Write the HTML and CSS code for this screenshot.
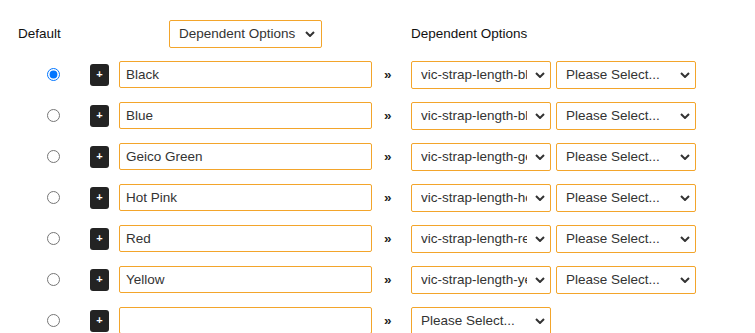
FILE: index.html
```html
<!DOCTYPE html>
<html lang="en">
<head>
    <meta charset="UTF-8">
    <meta name="viewport" content="width=device-width, initial-scale=1.0">
    <title>Dependent Options</title>
    <link rel="stylesheet" href="styles.css">
</head>
<body>
    <div class="options" id="options">
        <!-- Header -->
        <div class="row head">
            <div class="col-default">Default</div>
            <div class="col-btn"></div>
            <div class="col-name">
                <div class="select-box head-select">
                    <select><option>Dependent Options</option></select>
                    <svg class="chevron" width="10" height="6" viewBox="0 0 10 6"><path d="M1 1l4 4 4-4" fill="none" stroke="#333" stroke-width="2"/></svg>
                </div>
            </div>
            <div class="col-sep"></div>
            <div class="col-deps">Dependent Options</div>
        </div>
        <!-- Option rows are added here -->
    </div>

    <script>
        // Option rows
        const optionData = [
            { name: "Black", deps: ["vic-strap-length-black", "Please Select..."] },
            { name: "Blue", deps: ["vic-strap-length-blue", "Please Select..."] },
            { name: "Geico Green", deps: ["vic-strap-length-geico-green", "Please Select..."] },
            { name: "Hot Pink", deps: ["vic-strap-length-hot-pink", "Please Select..."] },
            { name: "Red", deps: ["vic-strap-length-red", "Please Select..."] },
            { name: "Yellow", deps: ["vic-strap-length-yellow", "Please Select..."] },
            { name: "", deps: ["Please Select..."] },
        ];

        const chevron = '<svg class="chevron" width="10" height="6" viewBox="0 0 10 6"><path d="M1 1l4 4 4-4" fill="none" stroke="#333" stroke-width="2"/></svg>';

        const options = document.getElementById('options');
        optionData.forEach((opt, index) => {
            const row = document.createElement('div');
            row.className = 'row';
            row.innerHTML = `
                <div class="col-default"><input type="radio" name="default" ${index === 0 ? 'checked' : ''}></div>
                <div class="col-btn"><span class="add-btn">+</span></div>
                <div class="col-name"><input class="name-input" type="text" value="${opt.name}"></div>
                <div class="col-sep">&raquo;</div>
                <div class="col-deps">
                    ${opt.deps.map(d => `<div class="select-box"><select><option>${d}</option></select>${chevron}</div>`).join('')}
                </div>
            `;
            options.appendChild(row);
        });
    </script>
</body>
</html>
```

FILE: styles.css
```css
/* General Styles */
* {
    margin: 0;
    padding: 0;
    box-sizing: border-box;
}

body {
    background: #fff;
    color: #111;
    font-family: 'Liberation Sans', Arial, sans-serif;
    font-size: 13.5px;
    padding-top: 13px;
    overflow: hidden;
}

.row {
    display: flex;
    align-items: center;
    height: 41px;
}

.col-default {
    width: 90px;
    padding-left: 47px;
    display: flex;
    align-items: center;
}

.head .col-default {
    padding-left: 18px;
}

.col-default input[type="radio"] {
    width: 13px;
    height: 13px;
    margin: 0;
}

.col-btn {
    width: 29px;
}

.add-btn {
    display: flex;
    align-items: center;
    justify-content: center;
    width: 19px;
    height: 22px;
    background: #232323;
    color: #fff;
    border-radius: 3px;
    font-size: 11px;
    font-weight: bold;
    line-height: 1;
}

.col-name {
    width: 253px;
    display: flex;
    justify-content: center;
}

.col-sep {
    width: 39px;
    padding-left: 12px;
    font-weight: bold;
    color: #222;
}

.col-deps {
    display: flex;
    gap: 5px;
}

/* Form fields */
.name-input,
.select-box {
    font-family: inherit;
    font-size: 13.5px;
    color: #333;
    background: #fff;
    border: 1px solid #f3a52b;
    border-radius: 2px;
    outline: none;
}

.name-input {
    width: 100%;
    height: 27px;
    padding: 0 6px;
}

.select-box {
    display: flex;
    align-items: center;
    width: 140px;
    height: 28px;
}

.select-box select {
    -webkit-appearance: none;
    appearance: none;
    flex: 1;
    min-width: 0;
    height: 100%;
    border: none;
    background: transparent;
    font-family: inherit;
    font-size: 13.5px;
    color: #333;
    padding-left: 9px;
    outline: none;
}

.chevron {
    flex-shrink: 0;
    margin: 0 5px 0 8px;
}

.head-select {
    width: 153px;
}

.head-select .chevron {
    margin: 0 6px 0 2px;
}
```
